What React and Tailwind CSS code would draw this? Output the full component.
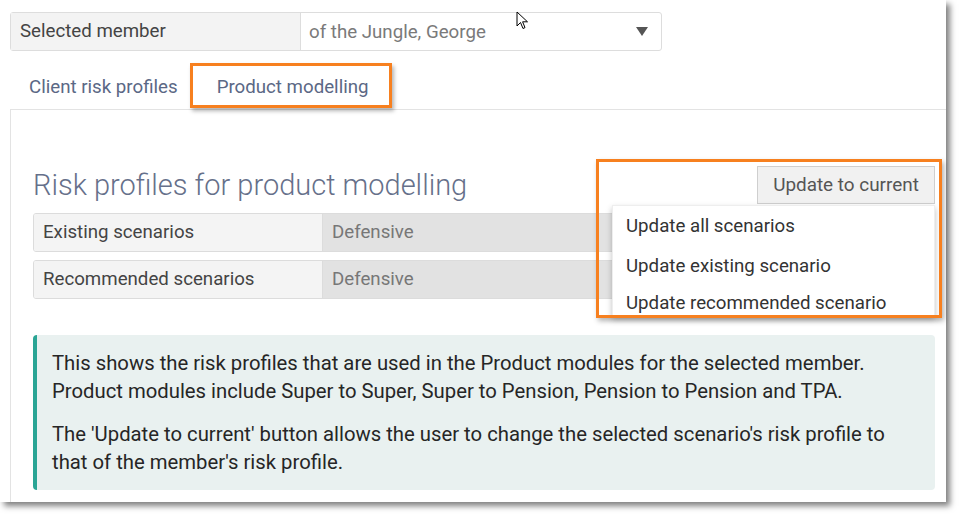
function Cursor() {
  return (
    <svg width="14" height="20" viewBox="0 0 14 20" className="absolute left-[516px] top-[11px]">
      <path d="M1 1 L1 15 L4.5 11.5 L7 17.5 L9 16.6 L6.6 10.8 L11.5 10.8 Z" fill="white" stroke="black" strokeWidth="1" strokeLinejoin="round" />
    </svg>
  )
}

const infoText = 'text-[20.3px] leading-[28px] text-[#262626]'

export default function App() {
  return (
    <div className="w-[968px] h-[514px] bg-white overflow-hidden font-['Roboto',sans-serif]">
      <div className="relative w-[946px] h-[502px] bg-white shadow-[4px_4px_6px_rgba(0,0,0,0.5)] pt-[12px]">
        <Cursor />

        {/* member select */}
        <div className="ml-[10px] flex w-[652px] h-[39px] border border-[#dddddd] rounded-[3px]">
          <div className="w-[290px] bg-[#f3f3f3] border-r border-[#dddddd] flex items-center pl-[9px] text-[18.7px] text-[#444]">
            Selected member
          </div>
          <div className="flex-1 flex items-center justify-between pl-[8px] pr-[13px] text-[18.7px] text-[#7a7a7a]">
            <span className="mt-[2px]">of the Jungle, George</span>
            <svg width="12" height="9" viewBox="0 0 12 9"><path d="M0 0 H12 L6 9 Z" fill="#555" /></svg>
          </div>
        </div>

        {/* tabs */}
        <div className="mt-[13px] ml-[10px] flex items-end h-[46px] border-b border-[#e3e3e3]">
          <div className="h-[44px] flex items-center pl-[19px] pr-[12px] text-[18.7px] text-[#5b6885]">
            Client risk profiles
          </div>
          <div className="h-[45px] mb-[1px] w-[202px] border-[3px] border-[#f7801f] shadow-[2px_3px_4px_rgba(0,0,0,0.3)] bg-white flex items-center pl-[24px] text-[18.7px] text-[#5b6885]">
            <span className="mt-[4px]">Product modelling</span>
          </div>
        </div>

        {/* panel */}
        <div className="ml-[10px] h-[392px] border-l border-[#e3e3e3] pl-[22px] pr-[11px] pt-[56px]">
          <div className="flex items-center justify-between h-[38px]">
            <h2 className="text-[29px] font-light text-[#66708a] mt-[2px]">Risk profiles for product modelling</h2>
            <div className="relative">
              <div className="absolute left-[-161px] top-[-7px] w-[346px] h-[159px] border-[3px] border-[#f7801f] shadow-[2px_3px_5px_rgba(0,0,0,0.3)] z-20"></div>
              <button className="h-[38px] w-[178px] bg-[#f1f1f1] border border-[#cfcfcf] text-[18.9px] text-[#555]">
                Update to current
              </button>
              <div className="absolute right-0 top-[39px] w-[323px] h-[111px] overflow-hidden bg-white shadow-[0_3px_6px_rgba(0,0,0,0.25)] border border-[#eeeeee] z-10 flex flex-col pl-[13px] text-[18.7px] text-[#333]">
                <div className="h-[40px] shrink-0 flex items-center">Update all scenarios</div>
                <div className="h-[40px] shrink-0 flex items-center">Update existing scenario</div>
                <div className="h-[34px] shrink-0 flex items-center">Update recommended scenario</div>
              </div>
            </div>
          </div>

          <div className="mt-[9px] flex flex-col gap-[8px]">
            <div className="flex h-[39px] border border-[#dcdcdc] rounded-[3px] overflow-hidden">
              <div className="w-[289px] bg-[#f4f4f4] border-r border-[#dcdcdc] flex items-center pl-[9px] text-[18.7px] text-[#444]">Existing scenarios</div>
              <div className="flex-1 bg-[#e2e2e2] flex items-center pl-[9px] text-[18.7px] text-[#777]">Defensive</div>
            </div>
            <div className="flex h-[39px] border border-[#dcdcdc] rounded-[3px] overflow-hidden">
              <div className="w-[289px] bg-[#f4f4f4] border-r border-[#dcdcdc] flex items-center pl-[9px] text-[18.7px] text-[#444]">Recommended scenarios</div>
              <div className="flex-1 bg-[#e2e2e2] flex items-center pl-[9px] text-[18.7px] text-[#777]">Defensive</div>
            </div>
          </div>

          <div className="mt-[36px] h-[155px] bg-[#e9f1f0] border-l-[4px] border-[#2aa595] rounded-[4px] pl-[15px] pt-[14px]">
            <p className={infoText}>
              This shows the risk profiles that are used in the Product modules for the selected member.
              <br />
              Product modules include Super to Super, Super to Pension, Pension to Pension and TPA.
            </p>
            <p className={`${infoText} mt-[15px]`}>
              The 'Update to current' button allows the user to change the selected scenario's risk profile to
              <br />
              that of the member's risk profile.
            </p>
          </div>
        </div>
      </div>
    </div>
  )
}
